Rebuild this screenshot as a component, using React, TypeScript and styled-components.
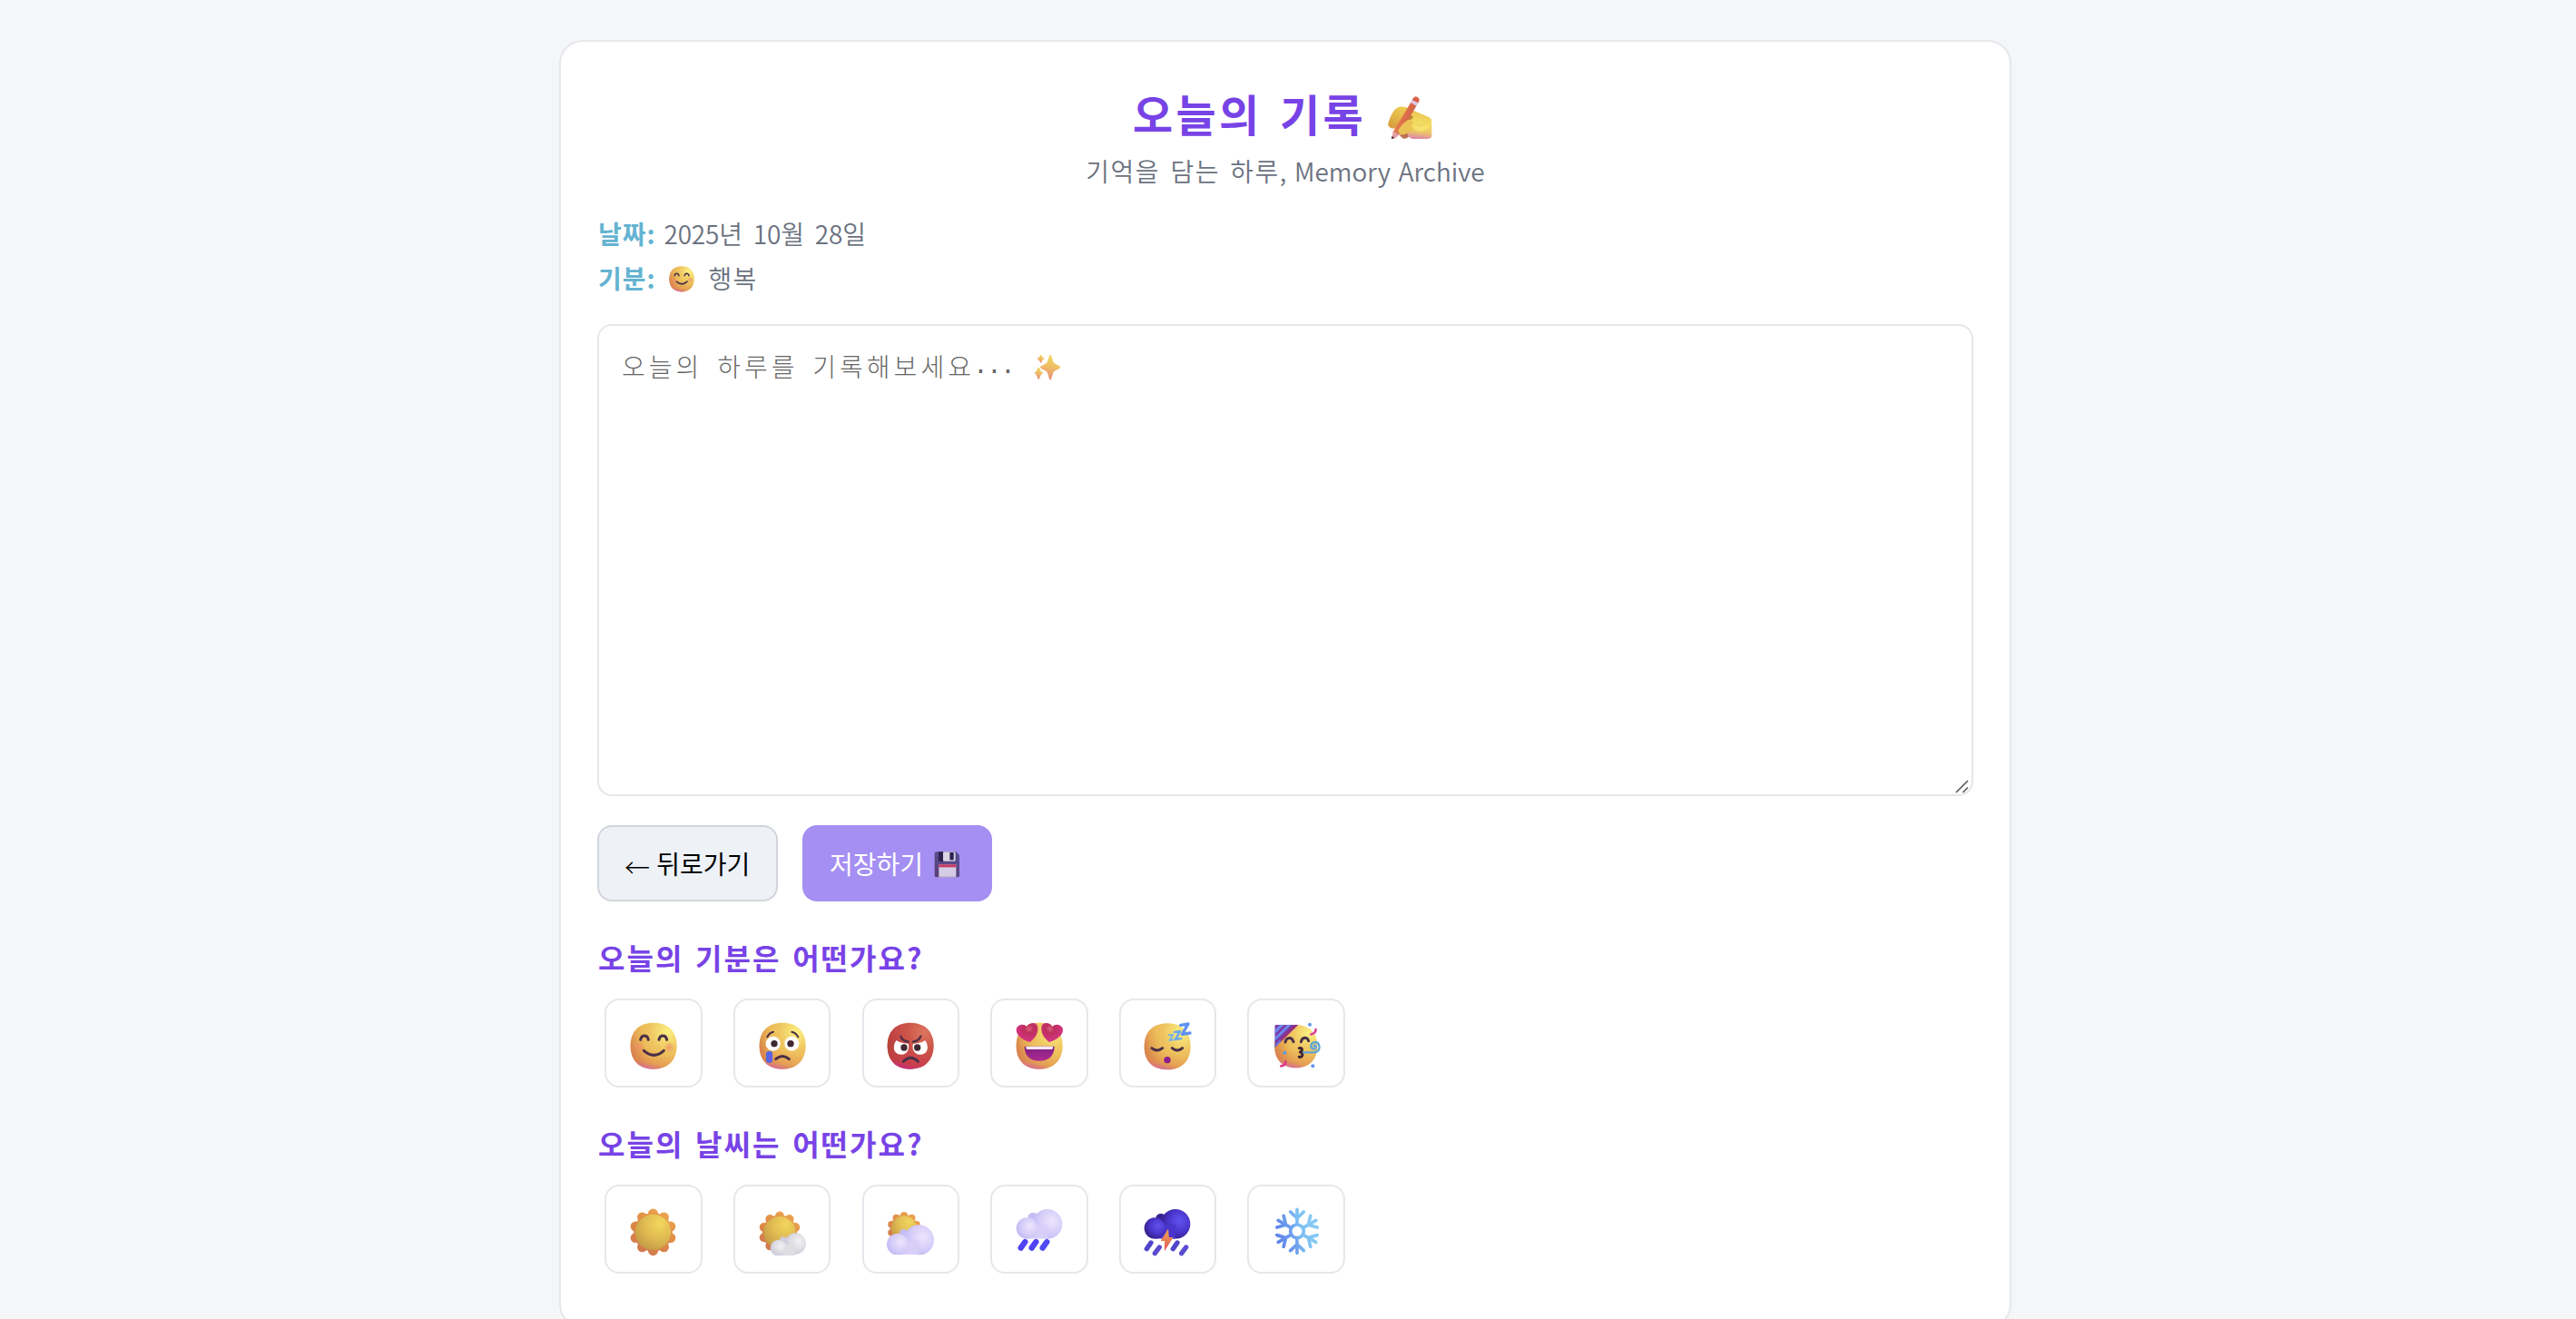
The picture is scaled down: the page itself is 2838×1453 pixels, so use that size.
import React from 'react';
import styled, { createGlobalStyle } from 'styled-components';

const GlobalStyle = createGlobalStyle`
  * { box-sizing: border-box; }
  body {
    margin: 0;
    background: #f4f6f8;
    font-family: 'Noto Sans CJK KR', 'Noto Sans', sans-serif;
    font-size: 28px;
    color: #6b7280;
  }
`;

const Page = styled.main`
  display: flex;
  justify-content: center;
  align-items: flex-start;
  height: 100vh;
  overflow: hidden;
  padding: 44px 6px 0 0;
`;

const Card = styled.section`
  flex: none;
  width: 1600px;
  height: 1419px;
  padding: 46px 40px 0;
  background: #fff;
  border: 2px solid #e5e7eb;
  border-radius: 26px;
`;

const Header = styled.header`
  display: flex;
  flex-direction: column;
  align-items: center;
`;

const Title = styled.h1`
  display: flex;
  align-items: center;
  gap: 23px;
  height: 64px;
  margin: 0;
  padding-right: 4px;
  font-size: 48px;
  line-height: 64px;
  font-weight: 700;
  letter-spacing: 3.4px;
  word-spacing: 5px;
  color: #7843e6;
  svg { margin-top: 12px; }
`;

const Subtitle = styled.p`
  margin: 12px 0 0;
  line-height: 40px;
  font-weight: 350;
  letter-spacing: 1.5px;
  word-spacing: 3.6px;
  white-space: pre;
`;

const Latin = styled.span`
  letter-spacing: -0.05px;
  word-spacing: 2.5px;
`;

const Meta = styled.dl`
  margin: 25px 0 26px;
`;

const MetaRow = styled.div`
  display: flex;
  align-items: center;
  height: 49px;
  line-height: 49px;
`;

const MetaLabel = styled.dt`
  width: 73.5px;
  padding-left: 1px;
  font-weight: 700;
  letter-spacing: 1px;
  color: #64b3d1;
`;

const MetaValue = styled.dd`
  display: flex;
  align-items: center;
  gap: 16px;
  margin: 0;
  white-space: pre;
  font-weight: 350;
  letter-spacing: 1.2px;
  word-spacing: 3.2px;
`;

const Digits = styled.span`
  letter-spacing: -0.2px;
`;

const Mood = styled.span`
  padding: 2px 0 0 5px;
`;

const Editor = styled.div`
  position: relative;
  height: 520px;
  padding: 24px 25px;
  border: 2px solid #e5e7eb;
  border-radius: 16px;
`;

const Placeholder = styled.div`
  display: flex;
  align-items: center;
  height: 41px;
  line-height: 41px;
  font-weight: 300;
  letter-spacing: 4px;
  word-spacing: 5.7px;
  color: #666;
  svg { margin: 2px 0 0 22px; }
`;

const Mono = styled.span`
  margin-left: -2px;
  font-family: 'Liberation Mono', monospace;
  font-weight: 400;
  letter-spacing: -1.8px;
`;

const Grip = styled.svg`
  position: absolute;
  right: 2px;
  bottom: 1px;
  width: 16px;
  height: 16px;
`;

const Actions = styled.div`
  display: flex;
  gap: 27px;
  margin-top: 32px;
`;

const Button = styled.button<{ $primary?: boolean }>`
  display: flex;
  align-items: center;
  width: ${p => (p.$primary ? 209 : 199)}px;
  height: 84px;
  padding: 0 0 0 ${p => (p.$primary ? 30 : 28)}px;
  border: ${p => (p.$primary ? '0' : '2px solid #d1d5db')};
  border-radius: 16px;
  background: ${p => (p.$primary ? '#a58ff2' : '#eef2f7')};
  color: ${p => (p.$primary ? '#fff' : '#000')};
  font: 400 28px 'Noto Sans CJK KR', sans-serif;
  white-space: pre;
  svg { margin: 3px 0 0 12px; }
`;

const Arrow = styled.span`
  margin-right: 1px;
  padding-top: 7px;
  font-weight: 300;
`;

const Question = styled.h2`
  margin: 39px 0 24px;
  padding-left: 1px;
  font-size: 32px;
  line-height: 44px;
  font-weight: 700;
  letter-spacing: 2px;
  word-spacing: 3.5px;
  color: #7843e6;
`;

const Choices = styled.div`
  display: flex;
  gap: 34.2px;
  padding-left: 8.4px;
`;

const Choice = styled.button`
  display: flex;
  align-items: center;
  justify-content: center;
  flex: none;
  width: 107.4px;
  height: 98px;
  padding: 6px 0 0;
  background: #fff;
  border: 2px solid #e5e7eb;
  border-radius: 16px;
`;

const Picture = styled.svg<{ $w: number; $h?: number }>`
  display: block;
  flex: none;
  width: ${p => p.$w}px;
  height: ${p => p.$h ?? p.$w}px;
  overflow: visible;
`;

const INK = '#4a3048';

/* Shaded head shared by all the faces. */
function Head({ id, red }: { id: string; red?: boolean }) {
  const d = 'M78 2C128 2 155 33 155 78S128 155 78 155S2 124 2 78S28 2 78 2Z';
  return (
    <>
      <defs>
        <radialGradient id={`${id}a`} cx="0.8" cy="0.2" r="0.95">
          <stop offset="0" stopColor={red ? '#dd7560' : '#fbf080'} />
          <stop offset="0.4" stopColor={red ? '#cc5548' : '#efc661'} />
          <stop offset="0.75" stopColor={red ? '#c44447' : '#eab253'} />
          <stop offset="1" stopColor={red ? '#b94a38' : '#d98e4b'} />
        </radialGradient>
        <linearGradient id={`${id}b`} x1="0.55" y1="0.6" x2="0.45" y2="1">
          <stop offset="0" stopColor={red ? '#dd4060' : '#e08a58'} stopOpacity="0" />
          <stop offset="0.7" stopColor={red ? '#cf3658' : '#df8558'} stopOpacity="0.4" />
          <stop offset="1" stopColor={red ? '#c62b80' : '#d9709a'} />
        </linearGradient>
        <linearGradient id={`${id}c`} x1="0" y1="0.6" x2="0.35" y2="0.5">
          <stop offset="0" stopColor={red ? '#ad3f30' : '#d4784a'} stopOpacity="0.75" />
          <stop offset="1" stopColor={red ? '#c04a3a' : '#e09a50'} stopOpacity="0" />
        </linearGradient>
      </defs>
      <path d={d} fill={`url(#${id}a)`} />
      <path d={d} fill={`url(#${id}c)`} />
      <path d={d} fill={`url(#${id}b)`} />
    </>
  );
}

const Stroke = ({ d, w = 8, c = INK }: { d: string; w?: number; c?: string }) => (
  <path d={d} fill="none" stroke={c} strokeWidth={w} strokeLinecap="round" strokeLinejoin="round" />
);

function Smile({ id, w = 52, h }: { id: string; w?: number; h?: number }) {
  return (
    <Picture $w={w} $h={h} viewBox="0 0 156 156" preserveAspectRatio="none">
      <Head id={id} />
      <defs>
        <radialGradient id={`${id}d`}>
          <stop offset="0" stopColor="#ee8a6c" stopOpacity="0.75" />
          <stop offset="1" stopColor="#ee8a6c" stopOpacity="0" />
        </radialGradient>
      </defs>
      <circle cx="29" cy="83" r="19" fill={`url(#${id}d)`} />
      <circle cx="130" cy="83" r="19" fill={`url(#${id}d)`} />
      <Stroke d="M35 58C39 41 57 41 61 58" w={9} />
      <Stroke d="M96 58C100 41 118 41 122 58" w={9} />
      <Stroke d="M46 94Q79 124 112 94" w={9} />
    </Picture>
  );
}

function Cry() {
  return (
    <Picture $w={52} viewBox="0 0 156 156">
      <Head id="cry" />
      <Stroke d="M28 49Q34 35 48 32" w={6} />
      <Stroke d="M109 32Q123 35 130 49" w={6} />
      <circle cx="47" cy="71" r="24" fill="#fff" />
      <circle cx="109" cy="71" r="24" fill="#fff" />
      <circle cx="51" cy="71" r="11" fill="#402832" />
      <circle cx="105" cy="71" r="11" fill="#402832" />
      <rect x="24" y="96" width="21" height="38" rx="9" fill="#4d68e8" />
      <rect x="32" y="104" width="10" height="26" rx="5" fill="#6a5ce8" />
      <Stroke d="M56 122Q78 103 100 122" w={9} />
    </Picture>
  );
}

function Angry() {
  return (
    <Picture $w={52} viewBox="0 0 156 156">
      <Head id="ang" red />
      <path d="M32 60Q44 70 71 71C76 90 66 106 49 107C30 107 21 94 24 78Q26 66 32 60Z" fill="#fff" />
      <path d="M126 60Q114 70 87 71C82 90 92 106 109 107C128 107 137 94 134 78Q132 66 126 60Z" fill="#fff" />
      <circle cx="57" cy="84" r="11" fill="#402832" />
      <circle cx="101" cy="84" r="11" fill="#402832" />
      <Stroke d="M46 47Q52 62 71 65" w={7} />
      <Stroke d="M112 47Q106 62 87 65" w={7} />
      <Stroke d="M55 130Q79 105 103 130" w={9} />
    </Picture>
  );
}

function Love() {
  const heart = 'M47 66C22 58 3 44 2 27C1 10 26 2 37 15C42 2 71 -4 73 18C75 40 60 56 47 66Z';
  return (
    <Picture $w={52} viewBox="0 0 156 156">
      <Head id="love" />
      <defs>
        <radialGradient id="loveh" cx="0.6" cy="0.3" r="0.7">
          <stop offset="0" stopColor="#dc6080" />
          <stop offset="0.3" stopColor="#bd2f5c" />
          <stop offset="1" stopColor="#d8338a" />
        </radialGradient>
        <linearGradient id="lovem" x1="0" y1="0" x2="0" y2="1">
          <stop offset="0" stopColor="#7d1f83" />
          <stop offset="1" stopColor="#b02a90" />
        </linearGradient>
      </defs>
      <path d={heart} fill="url(#loveh)" />
      <path d={heart} transform="translate(158 0) scale(-1 1)" fill="url(#loveh)" />
      <path d="M29 80H128C128 112 108 128 78 128S29 112 29 80Z" fill="url(#lovem)" />
      <path d="M34 80H123V86Q122 90 117 90H40Q35 90 34 86Z" fill="#f3e9f8" />
    </Picture>
  );
}

function Sleepy() {
  return (
    <Picture $w={52} viewBox="0 0 156 156">
      <g transform="translate(0 2)"><Head id="slp" /></g>
      <Stroke d="M27 86Q44 100 62 86" w={9} />
      <Stroke d="M94 86Q111 100 128 86" w={9} />
      <circle cx="78" cy="125" r="11" fill="#8d1d8c" />
      <Stroke d="M84 43L97 41L86 60L98 58" w={6} c="#7ab4e2" />
      <Stroke d="M102 33L120 30L105 57L124 54" w={8} c="#6faae6" />
      <Stroke d="M122 10L147 6L127 40L153 36" w={10} c="#6092f2" />
    </Picture>
  );
}

function Party() {
  return (
    <Picture $w={52} viewBox="0 0 156 156">
      <g transform="translate(5 7) scale(0.925)"><Head id="pty" /></g>
      <defs>
        <clipPath id="hat"><path d="M7 14Q7 8 13 8H85L7 84Z" /></clipPath>
      </defs>
      <g clipPath="url(#hat)">
        <rect width="90" height="90" fill="#7b3aa0" />
        <Stroke d="M-10 50L50 -10" w={10} c="#6d86f0" />
        <Stroke d="M-10 74L74 -10" w={9} c="#6d86f0" />
        <Stroke d="M-4 92L30 58" w={9} c="#6d6fdc" />
        <Stroke d="M30 58L86 4" w={10} c="#9a2c80" />
      </g>
      <Stroke d="M42 66C46 48 64 48 69 65" w={9} />
      <Stroke d="M94 65C98 48 114 48 119 62" w={9} />
      <Stroke d="M88 86C98 83 101 94 91 99C103 100 100 118 88 115" w={9} c="#3c2630" />
      <Stroke d="M102 100H138C154 98 158 84 153 74C147 62 129 64 127 78C127 91 143 93 144 81C143 76 138 76 137 79" w={7} c="#5fa6d8" />
      <circle cx="123" cy="8" r="6" fill="#6295ee" />
      <circle cx="40" cy="101" r="6" fill="#5f9ae0" />
      <circle cx="133" cy="145" r="6" fill="#6295ee" />
      <Stroke d="M127 40Q142 38 143 24" w={8} c="#e0439a" />
      <Stroke d="M28 145Q43 144 43 130" w={8} c="#dd3a8c" />
    </Picture>
  );
}

function SunDisk({ id, cx, cy, r }: { id: string; cx: number; cy: number; r: number }) {
  const k = r / 77;
  return (
    <>
      <defs>
        <linearGradient id={`${id}r`} gradientUnits="userSpaceOnUse" x1={cx + r * 0.6} y1={cy - r} x2={cx - r * 0.6} y2={cy + r}>
          <stop offset="0" stopColor="#eda850" />
          <stop offset="0.5" stopColor="#de8a45" />
          <stop offset="1" stopColor="#cf7550" />
        </linearGradient>
        <radialGradient id={`${id}s`} cx="0.68" cy="0.25" r="0.85">
          <stop offset="0" stopColor="#f2d65e" />
          <stop offset="0.5" stopColor="#e0bb52" />
          <stop offset="1" stopColor="#c29845" />
        </radialGradient>
      </defs>
      <g fill={`url(#${id}r)`}>
        {Array.from({ length: 10 }, (_, i) => {
          const a = (i * Math.PI) / 5;
          return <circle key={i} cx={cx + Math.sin(a) * 61 * k} cy={cy - Math.cos(a) * 61 * k} r={16.5 * k} />;
        })}
        <circle cx={cx} cy={cy} r={64 * k} />
      </g>
      <circle cx={cx} cy={cy} r={59 * k} fill={`url(#${id}s)`} />
    </>
  );
}

type Puff = [number, number, number];

function Cloud({ id, puffs, base, tones }: { id: string; puffs: Puff[]; base: number; tones: [string, string, string] }) {
  const [back, left, right] = puffs;
  return (
    <>
      <defs>
        <radialGradient id={id} cx="0.64" cy="0.4" r="0.62">
          <stop offset="0" stopColor={tones[0]} />
          <stop offset="0.6" stopColor={tones[1]} />
          <stop offset="1" stopColor={tones[2]} />
        </radialGradient>
        <clipPath id={`${id}k`}><rect x="-5" y="-5" width="166" height={base + 5} /></clipPath>
      </defs>
      <g clipPath={`url(#${id}k)`}>
        <circle cx={back[0]} cy={back[1]} r={back[2]} fill={tones[2]} />
        <circle cx={right[0]} cy={right[1]} r={right[2]} fill={`url(#${id})`} />
        <rect x={left[0]} y={left[1] - 12} width={right[0] - left[0]} height={base - left[1] + 12} fill={tones[1]} />
        <circle cx={left[0]} cy={left[1]} r={left[2]} fill={`url(#${id})`} />
      </g>
    </>
  );
}

const LAVENDER: [string, string, string] = ['#ece6fc', '#d8cff9', '#c5bdf5'];

const Sunny = () => (
  <Picture $w={52} viewBox="0 0 156 156"><SunDisk id="s1" cx={76.5} cy={79} r={77} /></Picture>
);

const FewClouds = () => (
  <Picture $w={52} viewBox="0 0 156 156">
    <SunDisk id="s2" cx={69} cy={80} r={69} />
    <Cloud id="c2" puffs={[[81, 106, 12], [65, 131, 27], [121, 117, 35]]} base={157} tones={['#f2f2f6', '#dddde2', '#cdcbdc']} />
  </Picture>
);

const Cloudy = () => (
  <Picture $w={52} viewBox="0 0 156 156">
    <SunDisk id="s3" cx={57} cy={67} r={55} />
    <Cloud id="c3" puffs={[[56, 83, 14], [36, 119, 36], [106, 105, 50]]} base={154} tones={LAVENDER} />
  </Picture>
);

const Rainy = () => (
  <Picture $w={52} viewBox="0 0 156 156">
    <Cloud id="c4" puffs={[[57, 31, 17], [37, 66, 35], [105, 52, 49]]} base={101} tones={LAVENDER} />
    <Stroke d="M31 111L17 131" w={19} c="#4f42f2" />
    <Stroke d="M67 111L53 131" w={19} c="#4f42f2" />
    <Stroke d="M103 111L89 131" w={19} c="#4f4cf4" />
  </Picture>
);

const Stormy = () => (
  <Picture $w={52} viewBox="0 0 156 156">
    <Cloud id="c5" puffs={[[57, 34, 17], [37, 66, 35], [105, 52, 49]]} base={101} tones={['#6152ee', '#4a35cc', '#38228f']} />
    <Stroke d="M24 114L10 134" w={16} c="#5046cc" />
    <Stroke d="M52 129L37 149" w={16} c="#5a4cd0" />
    <Stroke d="M111 114L97 134" w={16} c="#5046cc" />
    <Stroke d="M140 129L125 149" w={16} c="#5a4cd0" />
    <defs>
      <linearGradient id="bolt" x1="0" y1="0" x2="0" y2="1">
        <stop offset="0" stopColor="#eda850" />
        <stop offset="1" stopColor="#e0555a" />
      </linearGradient>
    </defs>
    <path d="M81 68L84 96H98L69 142V108H56Z" fill="url(#bolt)" />
  </Picture>
);

const Snowy = () => (
  <Picture $w={52} viewBox="0 0 156 156">
    <defs>
      <linearGradient id="snow" gradientUnits="userSpaceOnUse" x1="20" y1="90" x2="130" y2="60">
        <stop offset="0" stopColor="#6186ea" />
        <stop offset="0.45" stopColor="#6fa4ee" />
        <stop offset="0.65" stopColor="#7cbff3" />
        <stop offset="1" stopColor="#86c9f5" />
      </linearGradient>
    </defs>
    <g fill="none" stroke="url(#snow)" strokeWidth="11" strokeLinecap="round">
      <circle cx="81" cy="76" r="22" />
      {Array.from({ length: 6 }, (_, i) => {
        const turn = (x: number, y: number) => {
          const a = (i * Math.PI) / 3;
          return `${(81 + x * Math.cos(a) - y * Math.sin(a)).toFixed(1)} ${(76 + x * Math.sin(a) + y * Math.cos(a)).toFixed(1)}`;
        };
        return (
          <path key={i} d={`M${turn(0.1, -27)}L${turn(0, -72)}M${turn(-22, -64)}L${turn(0, -43)}L${turn(22, -64)}`} />
        );
      })}
    </g>
  </Picture>
);

const WritingHand = () => (
  <Picture $w={52} viewBox="0 0 156 156">
    <defs>
      <linearGradient id="hand" x1="0.6" y1="0" x2="0.5" y2="1">
        <stop offset="0" stopColor="#e9c24f" />
        <stop offset="0.45" stopColor="#f3dc62" />
        <stop offset="0.75" stopColor="#eec765" />
        <stop offset="1" stopColor="#dc86ac" />
      </linearGradient>
      <linearGradient id="index" x1="0.2" y1="0.9" x2="0.7" y2="0.1">
        <stop offset="0" stopColor="#d9a03f" />
        <stop offset="1" stopColor="#edcb52" />
      </linearGradient>
      <linearGradient id="pencil" x1="0.2" y1="0.3" x2="0.8" y2="0.6">
        <stop offset="0" stopColor="#ea8450" />
        <stop offset="1" stopColor="#cf5a45" />
      </linearGradient>
    </defs>
    <path d="M5 92C12 72 21 52 33 45C42 39 56 40 66 43L74 70L36 104C27 116 16 114 9 108C3 104 3 98 5 92Z" fill="url(#index)" />
    <path d="M72 62L84 52L140 76Q148 80 148 90V138Q146 147 132 147H86Q74 146 68 132L62 90Z" fill="url(#hand)" />
    <path d="M42 136L64 118L72 140Q64 148 54 146Z" fill="#bf7350" />
    <path d="M62 58L88 74L50 118L34 110Z" fill="#b98a38" />
    <path d="M86 15Q92 5 100 9L104 12Q109 16 105 24L42 134L20 124Z" fill="url(#pencil)" />
    <path d="M84 18L104 28L97 38L79 27Z" fill="#dcc8e8" />
    <path d="M86 15Q92 5 100 9L104 12Q109 16 105 24L103 28L84 18Z" fill="#dc5f48" />
    <path d="M20 122L41 134L24 146L16 147Z" fill="#e3a0a4" />
    <path d="M16 147V138L25 143Z" fill="#33202a" />
    <path d="M38 116Q48 98 66 86Q78 78 88 92L94 112Q84 118 64 130Q48 136 40 128Q36 122 38 116Z" fill="#eac354" />
    <path d="M88 104Q108 124 132 108" fill="none" stroke="#f8e96e" strokeWidth="14" strokeLinecap="round" opacity="0.7" />
  </Picture>
);

const Sparkles = () => (
  <Picture $w={30} $h={29} viewBox="0 0 86 86" preserveAspectRatio="none">
    <defs>
      <linearGradient id="spark" x1="0.5" y1="0" x2="0.3" y2="1">
        <stop offset="0" stopColor="#f0d95c" />
        <stop offset="0.5" stopColor="#eebb68" />
        <stop offset="1" stopColor="#e68576" />
      </linearGradient>
    </defs>
    <g fill="url(#spark)">
      <path d="M52 2C56 2 58 20 63 28C69 35 84 38 84 43S69 52 63 58C58 66 56 85 52 85S46 66 41 58C35 52 20 48 20 43S35 35 41 28C46 20 48 2 52 2Z" />
      <path d="M22 2C25 2 25 12 35 15C25 18 25 29 22 29S19 18 8 15C19 12 19 2 22 2Z" />
      <path d="M15 44C19 44 19 57 30 62C19 66 19 82 15 82S11 66 1 62C11 57 11 44 15 44Z" />
    </g>
  </Picture>
);

const Floppy = () => (
  <Picture $w={28.7} viewBox="0 0 86 86">
    <defs>
      <linearGradient id="disk" x1="0.8" y1="0" x2="0.3" y2="1">
        <stop offset="0" stopColor="#56529a" />
        <stop offset="1" stopColor="#5c3f76" />
      </linearGradient>
    </defs>
    <path d="M8 1H74L84 12V79Q84 85 78 85H8Q2 85 2 79V7Q2 1 8 1Z" fill="url(#disk)" />
    <path d="M15 1H72V33H18Q15 33 15 30Z" fill="#2f2250" />
    <rect x="30" y="1" width="41" height="31" rx="3" fill="#dad5e4" />
    <rect x="52" y="3" width="13" height="25" fill="#2f2250" />
    <path d="M16 43H73V85H16Z" fill="#d5cde6" />
    <path d="M16 43H73V52H16Z" fill="#c93a62" />
    <path d="M16 82H73V85H16Z" fill="#b8acc0" />
  </Picture>
);

const MOODS = [<Smile id="sm" />, <Cry />, <Angry />, <Love />, <Sleepy />, <Party />];
const WEATHER = [<Sunny />, <FewClouds />, <Cloudy />, <Rainy />, <Stormy />, <Snowy />];

function Picker({ question, options }: { question: string; options: React.ReactNode[] }) {
  return (
    <>
      <Question>{question}</Question>
      <Choices>
        {options.map((icon, i) => <Choice key={i} type="button">{icon}</Choice>)}
      </Choices>
    </>
  );
}

export default function App() {
  return (
    <Page>
      <GlobalStyle />
      <Card>
        <Header>
          <Title>오늘의 기록<WritingHand /></Title>
          <Subtitle>기억을 담는 하루<Latin>, Memory Archive</Latin></Subtitle>
        </Header>
        <Meta>
          <MetaRow>
            <MetaLabel>날짜:</MetaLabel>
            <MetaValue>
              <span><Digits>2025</Digits>년 <Digits>10</Digits>월 <Digits>28</Digits>일</span>
            </MetaValue>
          </MetaRow>
          <MetaRow>
            <MetaLabel>기분:</MetaLabel>
            <MetaValue><Mood><Smile id="ms" w={28} h={28.6} /></Mood>행복</MetaValue>
          </MetaRow>
        </Meta>
        <Editor>
          <Placeholder>오늘의 하루를 기록해보세요<Mono>...</Mono><Sparkles /></Placeholder>
          <Grip viewBox="0 0 16 16">
            <path d="M1 15L14 2M8.5 15L14 9.5" stroke="#5c5c5c" strokeWidth="1.7" />
          </Grip>
        </Editor>
        <Actions>
          <Button type="button"><Arrow>←</Arrow> 뒤로가기</Button>
          <Button type="button" $primary>저장하기<Floppy /></Button>
        </Actions>
        <Picker question="오늘의 기분은 어떤가요?" options={MOODS} />
        <Picker question="오늘의 날씨는 어떤가요?" options={WEATHER} />
      </Card>
    </Page>
  );
}
